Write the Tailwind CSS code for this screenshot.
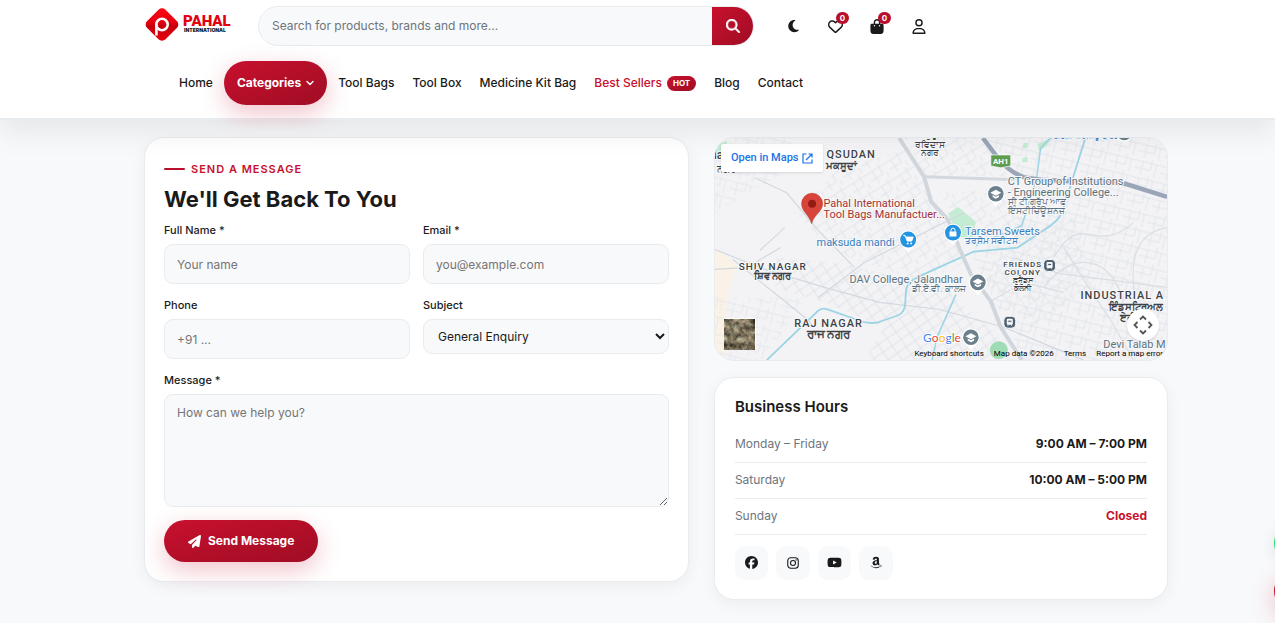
<!DOCTYPE html>
<html lang="en">
<head>
  <meta charset="UTF-8" />
  <meta name="viewport" content="width=device-width, initial-scale=1.0" />
  <title>Contact - Pahal International</title>
  <script src="https://cdn.jsdelivr.net/npm/@tailwindcss/browser@4"></script>
</head>
<body class="min-h-screen overflow-x-hidden bg-[#f8f9fb] font-['Inter',sans-serif] text-[#1a1a1a]">

  <header class="relative z-10 border-b-2 border-[#e9ecef] bg-white pl-[37px] shadow-[0_12px_28px_rgba(0,0,0,0.08)]">
    <div class="mx-auto max-w-[1024px]">
      <div class="flex items-center pt-[6px]">
        <a href="#" aria-label="Pahal International" class="mr-[27px] block">
          <svg class="h-[36px] w-[87px]" viewBox="0 0 87 36">
            <defs>
              <linearGradient id="logoRed" x1="0" y1="0" x2="1" y2="1">
                <stop offset="0" stop-color="#ff0a14" /><stop offset=".45" stop-color="#e3000f" /><stop offset=".55" stop-color="#c4000c" /><stop offset="1" stop-color="#f0000f" />
              </linearGradient>
            </defs>
            <rect x="5" y="3.5" width="26" height="26" rx="5" transform="rotate(45 18 16.5)" fill="url(#logoRed)" />
            <path d="M12.400 27.500V16.500" stroke="#fff" stroke-width="2.600" />
            <circle cx="18" cy="16.500" r="5.700" fill="none" stroke="#fff" stroke-width="2.600" />
            <text x="39" y="18" font-family="Roboto, sans-serif" font-size="15" font-weight="900" fill="#e3000f">PAHAL</text>
            <text x="40" y="24" font-family="Inter, sans-serif" font-size="5" font-weight="900" fill="#222">INTERNATIONAL</text>
          </svg>
        </a>
        <form class="flex h-[40px] w-[496px] overflow-hidden rounded-full border border-[#e9ecef] bg-[#f8f9fb]">
          <input type="search" aria-label="Search" placeholder="Search for products, brands and more..." class="min-w-0 flex-1 px-[13px] text-[12px] outline-none placeholder:text-[#6c757d]" />
          <button type="button" aria-label="Search" class="flex w-[41px] items-center justify-center bg-linear-to-br from-[#c8102e] to-[#a00d24] text-white">
            <svg class="size-[14px]" viewBox="0 0 512 512" fill="currentColor" stroke="currentColor" stroke-width="16"><path d="M416 208c0 45.9-14.9 88.3-40 122.7L502.6 457.4c12.5 12.5 12.5 32.8 0 45.3s-32.8 12.5-45.3 0L330.7 376c-34.4 25.2-76.8 40-122.7 40C93.1 416 0 322.9 0 208S93.1 0 208 0S416 93.1 416 208zM208 352a144 144 0 1 0 0-288 144 144 0 1 0 0 288z" /></svg>
          </button>
        </form>
        <div class="ml-[22px] flex gap-2">
          <button aria-label="Dark mode" class="flex size-[34px] items-center justify-center">
            <svg class="h-[14px] w-[11px]" viewBox="0 0 384 512" fill="currentColor"><path d="M223.5 32C100 32 0 132.3 0 256S100 480 223.5 480c60.6 0 115.5-24.2 155.8-63.4c5-4.9 6.3-12.5 3.1-18.7s-10.1-9.7-17-8.5c-9.8 1.7-19.8 2.6-30.1 2.6c-96.9 0-175.5-78.8-175.5-176c0-65.8 36-123.1 89.3-153.3c6.1-3.5 9.2-10.5 7.7-17.3s-7.3-11.9-14.3-12.5c-6.3-.5-12.6-.8-19-.8z" /></svg>
          </button>
          <button aria-label="Wishlist" class="relative flex size-[34px] items-center justify-center">
            <svg class="size-[15px]" viewBox="0 0 512 512" fill="currentColor"><path d="M225.8 468.2l-2.5-2.3L48.1 303.2C17.4 274.7 0 234.7 0 192.8v-3.3c0-70.4 50-130.8 119.2-144C158.6 37.9 198.9 47 231 69.6c9 6.4 17.4 13.8 25 22.3c4.2-4.8 8.7-9.2 13.5-13.3c3.7-3.2 7.5-6.2 11.5-9C313.1 47 353.4 37.9 392.8 45.4C462 58.6 512 119.1 512 189.5v3.3c0 41.9-17.4 81.9-48.1 110.4L288.7 465.9l-2.5 2.3c-8.2 7.6-19 11.9-30.2 11.9s-22-4.2-30.2-11.9zM239.1 145c-.4-.3-.7-.7-1-1.1l-17.8-20c-23.1-25.9-58-37.7-92-31.2C81.6 101.5 48 142.1 48 189.5v3.3c0 28.5 11.9 55.8 32.8 75.2L256 430.7 431.2 268c20.9-19.4 32.8-46.7 32.8-75.2v-3.3c0-47.3-33.6-88-80.1-96.9c-34-6.5-69 5.4-92 31.2l-18 20.2c-.3 .4-.7 .7-1 1.1c-4.5 4.5-10.6 7-16.9 7s-12.4-2.5-16.9-7z" /></svg>
            <span class="absolute top-[3px] right-[3px] flex h-[12px] w-[13px] items-center justify-center rounded-full bg-[#b80f2a] text-[8px] font-bold text-white">0</span>
          </button>
          <button aria-label="Cart" class="relative flex size-[34px] items-center justify-center">
            <svg class="h-[15px] w-[14px]" viewBox="0 0 448 512" fill="currentColor"><path d="M160 112c0-35.3 28.7-64 64-64s64 28.7 64 64v48H160V112zm-48 48H48c-26.5 0-48 21.5-48 48V416c0 53 43 96 96 96H352c53 0 96-43 96-96V208c0-26.5-21.5-48-48-48H336V112C336 50.1 285.9 0 224 0S112 50.1 112 112v48zm24 48a24 24 0 1 1 0 48 24 24 0 1 1 0-48zm152 24a24 24 0 1 1 48 0 24 24 0 1 1 -48 0z" /></svg>
            <span class="absolute top-[3px] right-[3px] flex h-[12px] w-[13px] items-center justify-center rounded-full bg-[#b80f2a] text-[8px] font-bold text-white">0</span>
          </button>
          <button aria-label="Account" class="flex size-[34px] items-center justify-center">
            <svg class="h-[15px] w-[14px]" viewBox="0 0 448 512" fill="currentColor"><path d="M304 128a80 80 0 1 0 -160 0 80 80 0 1 0 160 0zM96 128a128 128 0 1 1 256 0A128 128 0 1 1 96 128zM49.3 464H398.7c-8.9-63.3-63.3-112-129-112H178.3c-65.7 0-120.1 48.7-129 112zM0 482.3C0 383.8 79.8 304 178.3 304h91.4C368.2 304 448 383.8 448 482.3c0 16.4-13.3 29.7-29.7 29.7H29.7C13.3 512 0 498.7 0 482.3z" /></svg>
          </button>
        </div>
      </div>
      <nav class="flex items-center pt-[15px] pb-[13px] pl-[26px] text-[12px] font-medium whitespace-nowrap">
        <a href="#" class="px-[9px]">Home</a>
        <button class="mx-[2px] flex h-[44px] items-center gap-[5px] rounded-full bg-linear-to-br from-[#c8102e] to-[#a00d24] px-[13px] font-bold text-white shadow-[0_8px_24px_rgba(200,16,46,0.25)]">
          Categories
          <svg class="size-[8px]" viewBox="0 0 8 8" fill="none" stroke="currentColor" stroke-width="1.4" stroke-linecap="round" stroke-linejoin="round"><path d="M1 2.5 4 5.5 7 2.5" /></svg>
        </button>
        <a href="#" class="px-[9px]">Tool Bags</a>
        <a href="#" class="px-[9px]">Tool Box</a>
        <a href="#" class="px-[9px]">Medicine Kit Bag</a>
        <a href="#" class="flex items-center gap-[5px] px-[9px] text-[#c8102e]">Best Sellers
          <span class="flex h-[15px] items-center rounded-full bg-linear-to-br from-[#c8102e] to-[#a00d24] px-[6px] text-[8px] font-bold text-white">HOT</span>
        </a>
        <a href="#" class="px-[9px]">Blog</a>
        <a href="#" class="px-[9px]">Contact</a>
      </nav>
    </div>
  </header>

  <main class="pt-[17px] pl-[37px]">
    <div class="mx-auto grid max-w-[1024px] grid-cols-[1.2fr_1fr] items-start gap-[25px]">

      <section class="rounded-[20px] border border-[#e9ecef] bg-white px-[19px] pt-[23px] pb-[19px] shadow-[0_4px_16px_rgba(0,0,0,0.05)]">
        <p class="flex h-[16px] items-center gap-[6px] text-[11px] font-semibold tracking-[1px] text-[#c8102e]">
          <span class="h-[2px] w-[21px] rounded bg-[#b80f2a]"></span>SEND A MESSAGE
        </p>
        <h2 class="mt-[7px] text-[22px] leading-[30px] font-bold">We'll Get Back To You</h2>
        <form class="mt-[8px] grid grid-cols-2 items-start gap-[13px]">
          <div>
            <label for="name" class="mb-[6px] block text-[11px] leading-[16px] font-medium">Full Name *</label>
            <input id="name" type="text" placeholder="Your name" class="h-[40px] w-full rounded-[9px] border border-[#e9ecef] bg-[#f8f9fb] px-[12px] text-[12px] placeholder:text-[#757575]" />
          </div>
          <div>
            <label for="email" class="mb-[6px] block text-[11px] leading-[16px] font-medium">Email *</label>
            <input id="email" type="email" placeholder="you@example.com" class="h-[40px] w-full rounded-[9px] border border-[#e9ecef] bg-[#f8f9fb] px-[12px] text-[12px] placeholder:text-[#757575]" />
          </div>
          <div>
            <label for="phone" class="mb-[6px] block text-[11px] leading-[16px] font-medium">Phone</label>
            <input id="phone" type="tel" placeholder="+91 ..." class="h-[40px] w-full rounded-[9px] border border-[#e9ecef] bg-[#f8f9fb] px-[12px] text-[12px] placeholder:text-[#757575]" />
          </div>
          <div>
            <label for="subject" class="mb-[6px] block text-[11px] leading-[16px] font-medium">Subject</label>
            <select id="subject" class="h-[35px] w-full rounded-[9px] border border-[#e9ecef] bg-[#f8f9fb] pl-[10px] text-[12px]">
              <option>General Enquiry</option>
              <option>Bulk Order</option>
              <option>Support</option>
            </select>
          </div>
          <div class="col-span-2">
            <label for="message" class="mb-[6px] block text-[11px] leading-[16px] font-medium">Message *</label>
            <textarea id="message" placeholder="How can we help you?" class="block h-[113px] w-full resize rounded-[9px] border border-[#e9ecef] bg-[#f8f9fb] px-[12px] py-[9px] text-[12px] leading-[18px] placeholder:text-[#757575]"></textarea>
          </div>
          <button type="button" class="col-span-2 flex h-[42px] items-center gap-[7px] justify-self-start rounded-full bg-linear-to-br from-[#c8102e] to-[#a00d24] px-[24px] text-[12px] font-bold text-white shadow-[0_8px_24px_rgba(200,16,46,0.25)]">
            <svg class="size-[13px]" viewBox="0 0 512 512" fill="currentColor"><path d="M498.1 5.6c10.1 7 15.4 19.1 13.5 31.2l-64 416c-1.5 9.7-7.4 18.2-16 23s-18.9 5.4-28 1.6L284 427.7l-68.5 74.1c-8.9 9.7-22.9 12.9-35.2 8.1S160 493.2 160 480V396.4c0-4 1.5-7.8 4.2-10.7L331.8 202.8c5.8-6.3 5.6-16-.4-22s-15.7-6.4-22-.7L106 360.8 17.7 316.6C7.1 311.3 .3 300.7 0 288.9s5.9-22.8 16.1-28.7l448-256c10.7-6.1 23.9-5.5 34 1.4z" /></svg>
            Send Message
          </button>
        </form>
      </section>

      <div class="flex flex-col gap-4">
        <section class="relative h-[224px] overflow-hidden rounded-[20px] border border-[#e9ecef] bg-[#f2f3f5]">
          <svg class="h-full w-full" viewBox="0 0 454 223" preserveAspectRatio="xMinYMin slice" font-family="Roboto, 'Noto Sans', sans-serif">
            <defs>
              <pattern id="blocks" width="22" height="18" patternUnits="userSpaceOnUse" patternTransform="rotate(-32)">
                <path d="M0 4H22M0 12H14M6 4V18M14 0V12M18 12V18" stroke="#dfe3e8" stroke-width=".9" fill="none" />
              </pattern>
              <pattern id="tight" width="11" height="9" patternUnits="userSpaceOnUse" patternTransform="rotate(-35)">
                <path d="M0 3H11M4 0V9" stroke="#dce0e6" stroke-width=".8" fill="none" />
              </pattern>
              <pattern id="east" width="26" height="17" patternUnits="userSpaceOnUse" patternTransform="rotate(14)">
                <path d="M0 4H26M0 11H16M7 4V17M16 0V11M21 4V17" stroke="#dde1e6" stroke-width=".8" fill="none" />
              </pattern>
              <filter id="ground" x="0" y="0" width="1" height="1" color-interpolation-filters="sRGB">
                <feTurbulence type="fractalNoise" baseFrequency=".16" numOctaves="4" seed="7" />
                <feColorMatrix values=".8 .5 0 0 -.17  .7 .55 0 0 -.18  .6 .5 0 0 -.19  0 0 0 0 1" />
              </filter>
              <g id="school">
                <path d="M0 13C-3 8-9 6-9 0a9 9 0 0 1 18 0C9 6 3 8 0 13Z" fill="#fff" />
                <circle r="7.8" fill="#6b7f8c" />
                <path d="M-5.5-1 0-4 5.500-1 0 2ZM-3.200 1.300V3.300L0 5 3.200 3.300V1.300L0 3Z" fill="#fff" />
              </g>
              <g id="train">
                <rect x="-6" y="-6" width="12" height="12" rx="4" fill="#4d5f73" stroke="#fff" />
                <rect x="-3" y="-3.500" width="6" height="6" rx="1" fill="#fff" />
                <path d="M-2-2H2V0H-2ZM-2.500 4-1 2.500M2.500 4 1 2.500" fill="#4d5f73" stroke="#fff" stroke-width=".7" />
              </g>
            </defs>
            <rect width="454" height="223" fill="#f3f3f5" />
            <path d="M0 110 22 128 12 160 9 223H0Z" fill="#faf2e6" />
            <path d="M80 75 125 30 190 12 235 85 250 125 210 145 120 115Z" fill="url(#blocks)" />
            <path d="M60 120 120 125 230 150 285 200 300 223H150L170 190 110 165 60 150Z" fill="url(#tight)" />
            <path d="M0 160H90L50 223H0ZM0 0H80L70 35 0 75Z" fill="url(#east)" opacity=".8" />
            <path d="M190 0H265L295 38H212ZM225 55 320 50 310 95 260 110Z" fill="url(#blocks)" />
            <path d="M272 0H454V223H310L255 112 330 60Z" fill="url(#east)" />
            <path d="M300 90 360 80 380 150 320 190 270 145Z" fill="url(#tight)" opacity=".7" />
            <path d="M234 76 244 69 262 84 258 102 245 99ZM324 6 338 0 333 8 325 13ZM310 5H314V10H309ZM309 20 314 19V24H308ZM0 7 12 3V14L0 22Z" fill="#c3ecd2" />
            <circle cx="285" cy="213" r="9" fill="#9fdcb5" />
            <g fill="none" stroke="#d3d8df" stroke-width="1.200">
              <path d="M0 112 50 132 110 150 165 165 225 172 290 190 370 223M18 122 90 180 100 190M40 40 72 55 104 93 140 130M70 90 45 113M66 110 32 130 0 132M104 160 150 125 250 75" />
              <path d="M340 120C370 70 380 120 420 85M330 150C360 110 400 120 410 165M454 90C420 95 410 130 430 190M350 110 372 145 398 184 420 223M300 120 345 136 454 150M275 165 310 145 350 155" stroke="#dadee3" />
            </g>
            <g fill="none" stroke="#9bd4e4" stroke-width="2.200" stroke-linejoin="round">
              <path d="M52 223 103 174Q107 170 113 172L150 185Q160 187 167 184L184 178Q191 175 191 165L192 152Q193 145 205 139L260 114 304 110 337 88Q348 80 350 70L372 0" stroke-width="1.800" />
              <path d="M337 0 327 10 323 40 312 76 308 88 262 108M242 157 223 200 218 223" stroke-width="1.500" />
            </g>
            <path d="M210 39 304 42" stroke="#d3d8df" stroke-width="3" />
            <path d="M185 0 210 39 217 64 234 82 246 112 257 137 277 164 287 190 308 223" fill="none" stroke="#d0d6dc" stroke-width="4" stroke-linejoin="round" />
            <path d="M269 0 284 20Q296 35 312 40L327 42 412 46 454 59" fill="none" stroke="#9aa6b8" stroke-width="4.500" />
            <path d="M277 17H297V28L287 30 277 28Z" fill="#5f9c50" stroke="#fff" stroke-width=".7" />
            <text x="287" y="26" font-size="8" font-weight="700" fill="#fff" text-anchor="middle">AH1</text>

            <g fill="#3d4248" stroke="#f7f8f9" stroke-width="2" paint-order="stroke" font-weight="500">
              <text x="-5" y="21" font-size="12">da</text>
              <text x="2" y="34" font-size="10">ਨਗਰ</text>
              <text x="112" y="20" font-size="11" letter-spacing="1">QSUDAN</text>
              <text x="111" y="31" font-size="10" font-weight="700">ਮਕਸੂਦਾਂ</text>
              <text x="216" y="0" font-size="8" text-anchor="middle">ਗੁਰੂ</text>
              <text x="216" y="10" font-size="9" text-anchor="middle">ਰਵਿਦਾਸ</text>
              <text x="216" y="18" font-size="9" text-anchor="middle">ਨਗਰ</text>
              <text x="58" y="133" font-size="10" letter-spacing="1" text-anchor="middle">SHIV NAGAR</text>
              <text x="58" y="142" font-size="10" font-weight="700" text-anchor="middle">ਸ਼ਿਵ ਨਗਰ</text>
              <text x="114" y="190" font-size="11" letter-spacing="1" text-anchor="middle">RAJ NAGAR</text>
              <text x="114" y="201" font-size="12" font-weight="700" text-anchor="middle">ਰਾਜ ਨਗਰ</text>
              <text x="309" y="130" font-size="8" letter-spacing="1" text-anchor="middle">FRIENDS</text>
              <text x="309" y="138" font-size="8" letter-spacing="1" text-anchor="middle">COLONY</text>
              <text x="309" y="146" font-size="8" text-anchor="middle">ਫ਼ਰੈਂਡਸ</text>
              <text x="309" y="154" font-size="8" text-anchor="middle">ਕੋਲੋਨੀ</text>
              <text x="367" y="162" font-size="11" letter-spacing="1">INDUSTRIAL A</text>
              <text x="396" y="173" font-size="10" font-weight="700">ਇੰਡਸਟ੍ਰਿਅਲ</text>
              <text x="407" y="184" font-size="10" font-weight="700">ਏਰੀਆ</text>
            </g>
            <g fill="#5d7280" stroke="#f7f8f9" stroke-width="2" paint-order="stroke" font-size="11">
              <text x="294" y="47">CT Group of Institutions</text>
              <text x="294" y="58">- Engineering College...</text>
              <text x="294" y="67" font-size="9">ਸੀ ਟੀ ਗਰੁੱਪ ਆਫ</text>
              <text x="294" y="76" font-size="9">ਇੰਸਟੀਚਿਊਸ਼ਨਜ਼</text>
              <text x="135" y="146">DAV College, Jalandhar</text>
              <text x="252" y="155" font-size="9" text-anchor="end">ਡੀ.ਏ.ਵੀ. ਕਾਲਜ</text>
              <text x="390" y="211">Devi Talab M</text>
            </g>
            <g fill="#3a7ebf" stroke="#f7f8f9" stroke-width="2" paint-order="stroke" font-size="11">
              <text x="102" y="108">maksuda mandi</text>
              <text x="251" y="97">Tarsem Sweets</text>
              <text x="251" y="106" font-size="9">ਤਰਸੇਮ ਸਵੀਟਸ</text>
              <text x="340" y="1" font-size="8">ਗਰੀਨ ਐਵੇਨਿਊ ਪਾਰਕ</text>
            </g>
            <g fill="#a53232" stroke="#f7f8f9" stroke-width="2" paint-order="stroke" font-size="11">
              <text x="109" y="69">Pahal International</text>
              <text x="109" y="80">Tool Bags Manufactuer...</text>
            </g>
            <path d="M97 86C95 77 87 74 87 66a10.500 10.500 0 0 1 21 0C108 74 99 77 97 86Z" fill="#d8443a" stroke="#b83228" stroke-width=".6" />
            <circle cx="97.500" cy="66" r="4" fill="#951b17" />
            <path d="M194 115C191 110 185 108 185 102a9 9 0 0 1 18 0C203 108 197 110 194 115ZM239 108C236 103 230 101 230 95a9 9 0 0 1 18 0C248 101 242 103 239 108Z" fill="#fff" />
            <circle cx="194" cy="102" r="8" fill="#2494e0" />
            <circle cx="239" cy="95" r="8" fill="#2494e0" />
            <path d="M189 98H191L193 103.500H197.500L199 99.500H192" fill="#fff" stroke="#fff" />
            <circle cx="193.500" cy="106" r="1" fill="#fff" /><circle cx="197" cy="106" r="1" fill="#fff" />
            <path d="M235.500 94H242.500V99H235.500Z" fill="#fff" />
            <path d="M237 94V92.500A2 2 0 0 1 241 92.500V94" fill="none" stroke="#fff" />
            <use href="#school" x="282" y="56" />
            <use href="#school" x="264" y="145" />
            <use href="#school" x="257" y="200" />
            <use href="#train" x="336" y="128" />
            <use href="#train" x="296" y="185" />
            <circle cx="411" cy="-5" r="8" fill="#6b7f8c" stroke="#fff" stroke-width="1.500" />
            <text x="209" y="205" font-family="Lato, sans-serif" font-size="12" stroke="#fff" stroke-width="2" paint-order="stroke"><tspan fill="#4285f4">G</tspan><tspan fill="#ea4335">o</tspan><tspan fill="#fbbc05">o</tspan><tspan fill="#4285f4">g</tspan><tspan fill="#34a853">l</tspan><tspan fill="#ea4335">e</tspan></text>
            <rect x="9" y="181" width="32" height="32" rx="1" fill="#fff" />
            <rect x="10" y="182" width="30" height="30" filter="url(#ground)" />
          </svg>
          <a href="#" class="absolute top-[6px] left-[6px] flex h-[28px] items-center gap-[4px] rounded-[2px] bg-white px-[10px] font-['Roboto',sans-serif] text-[11px] font-medium text-[#1a73e8] shadow-sm">
            Open in Maps
            <svg class="size-[11px]" viewBox="0 0 11 11" fill="none" stroke="currentColor" stroke-width="1.2"><path d="M4.500 1H1V10H10V6.500M6.500 1H10V4.500M10 1 4 7" /></svg>
          </a>
          <button aria-label="Map camera controls" class="absolute right-[8px] bottom-[19px] flex size-[32px] items-center justify-center rounded-full bg-white text-[#555] shadow-sm">
            <svg class="size-[20px]" viewBox="0 0 20 20" fill="none" stroke="currentColor" stroke-width="1.800"><path d="M7 4.500 10 1.500 13 4.500M7 15.500 10 18.500 13 15.500M4.500 7 1.500 10 4.500 13M15.500 7 18.500 10 15.500 13" /></svg>
          </button>
          <div class="absolute right-[4px] bottom-0 flex h-[12px] gap-[10px] font-['Roboto',sans-serif] text-[8px] leading-[12px] whitespace-nowrap text-black">
            <button>Keyboard shortcuts</button>
            <span>Map data ©2026</span>
            <a href="#">Terms</a>
            <a href="#">Report a map error</a>
          </div>
        </section>

        <section class="rounded-[20px] border border-[#e9ecef] bg-white px-5 pt-[19px] pb-[19px] shadow-[0_4px_16px_rgba(0,0,0,0.05)]">
          <h3 class="mb-[9px] text-[15px] leading-[20px] font-semibold">Business Hours</h3>
          <table class="w-full text-[12px]">
            <tbody>
              <tr class="h-[36px] border-b border-[#e9ecef]">
                <th scope="row" class="text-left font-normal text-[#6c757d]">Monday – Friday</th>
                <td class="text-right font-bold">9:00 AM – 7:00 PM</td>
              </tr>
              <tr class="h-[36px] border-b border-[#e9ecef]">
                <th scope="row" class="text-left font-normal text-[#6c757d]">Saturday</th>
                <td class="text-right font-bold">10:00 AM – 5:00 PM</td>
              </tr>
              <tr class="h-[36px] border-b border-[#e9ecef]">
                <th scope="row" class="text-left font-normal text-[#6c757d]">Sunday</th>
                <td class="text-right font-bold text-[#c8102e]">Closed</td>
              </tr>
            </tbody>
          </table>
          <div class="mt-[11px] flex gap-[8px]">
            <a href="#" aria-label="Facebook" class="flex h-[34px] w-[33px] items-center justify-center rounded-[10px] bg-[#f8f9fb]">
              <svg class="size-[13px]" viewBox="0 0 512 512" fill="currentColor"><path d="M512 256C512 114.600 397.400 0 256 0S0 114.600 0 256C0 376 82.700 476.800 194.200 504.500V334.200H141.400V256h52.800V222.300c0-87.100 39.400-127.500 125-127.500c16.200 0 44.200 3.200 55.700 6.400V172c-6-.6-16.500-1-29.600-1c-42 0-58.200 15.900-58.200 57.200V256h83.600l-14.400 78.200H287V510.100C413.800 494.800 512 386.900 512 256z" /></svg>
            </a>
            <a href="#" aria-label="Instagram" class="flex h-[34px] w-[34px] items-center justify-center rounded-[10px] bg-[#f8f9fb]">
              <svg class="size-[12px]" viewBox="0 0 24 24" fill="none" stroke="currentColor" stroke-width="2.200"><rect x="1.500" y="1.500" width="21" height="21" rx="6" /><circle cx="12" cy="12" r="5" /><circle cx="18.200" cy="5.800" r="1.400" fill="currentColor" stroke="none" /></svg>
            </a>
            <a href="#" aria-label="YouTube" class="flex h-[34px] w-[33px] items-center justify-center rounded-[10px] bg-[#f8f9fb]">
              <svg class="h-[13px] w-[15px]" viewBox="0 0 576 512" fill="currentColor"><path d="M549.655 124.083c-6.281-23.650-24.787-42.276-48.284-48.597C458.781 64 288 64 288 64S117.220 64 74.629 75.486c-23.497 6.322-42.003 24.947-48.284 48.597-11.412 42.867-11.412 132.305-11.412 132.305s0 89.438 11.412 132.305c6.281 23.650 24.787 41.500 48.284 47.821C117.220 448 288 448 288 448s170.780 0 213.371-11.486c23.497-6.321 42.003-24.171 48.284-47.821 11.412-42.867 11.412-132.305 11.412-132.305s0-89.438-11.412-132.305zm-317.510 213.508V175.185l142.739 81.205-142.739 81.201z" /></svg>
            </a>
            <a href="#" aria-label="Amazon" class="flex h-[34px] w-[34px] items-center justify-center rounded-[10px] bg-[#f8f9fb]">
              <svg class="h-[13px] w-[12px]" viewBox="0 0 448 512" fill="currentColor"><path d="M257.200 162.700c-48.700 1.800-169.500 15.500-169.500 117.500 0 109.500 138.300 114 183.500 43.200 6.500 10.200 35.400 37.500 45.300 46.800l56.800-56S341 288.900 341 261.400V114.300C341 89 316.500 32 228.700 32 140.700 32 94 87 94 136.300l73.500 6.800c16.300-49.500 54.200-49.500 54.200-49.500 40.700-.1 35.500 29.800 35.500 69.100zm0 86.800c0 80-84.200 68-84.200 17.200 0-47.200 50.500-56.700 84.200-57.800v40.600zm136 163.500c-7.700 10-70 67-174.500 67S34.200 408.500 9.700 379c-6.800-7.700 1-11.300 5.500-8.300C88.500 415.200 203 488.500 387.700 401c7.500-3.700 13.300 2 5.500 12zm39.800 2.200c-6.500 15.800-16 26.800-21.200 31-5.500 4.500-9.500 2.700-6.500-3.800s19.300-46.500 12.700-55c-6.500-8.300-37-4.300-48-3.200-10.800 1-13 2-14-.3-2.300-5.700 21.700-15.500 37.500-17.500 15.700-1.800 41-.8 46 5.700 3.700 5.100 0 27.100-6.500 43.100z" /></svg>
            </a>
          </div>
        </section>
      </div>
    </div>
  </main>

  <div class="fixed -right-[39px] bottom-[12px] flex flex-col gap-2">
    <a href="#" aria-label="WhatsApp" class="size-[40px] rounded-full bg-[#25d366] shadow-[0_4px_16px_rgba(0,0,0,0.1)]"></a>
    <a href="#" aria-label="Back to top" class="size-[40px] rounded-full bg-[#b80f2a] shadow-[0_8px_24px_rgba(200,16,46,0.25)]"></a>
  </div>
</body>
</html>
